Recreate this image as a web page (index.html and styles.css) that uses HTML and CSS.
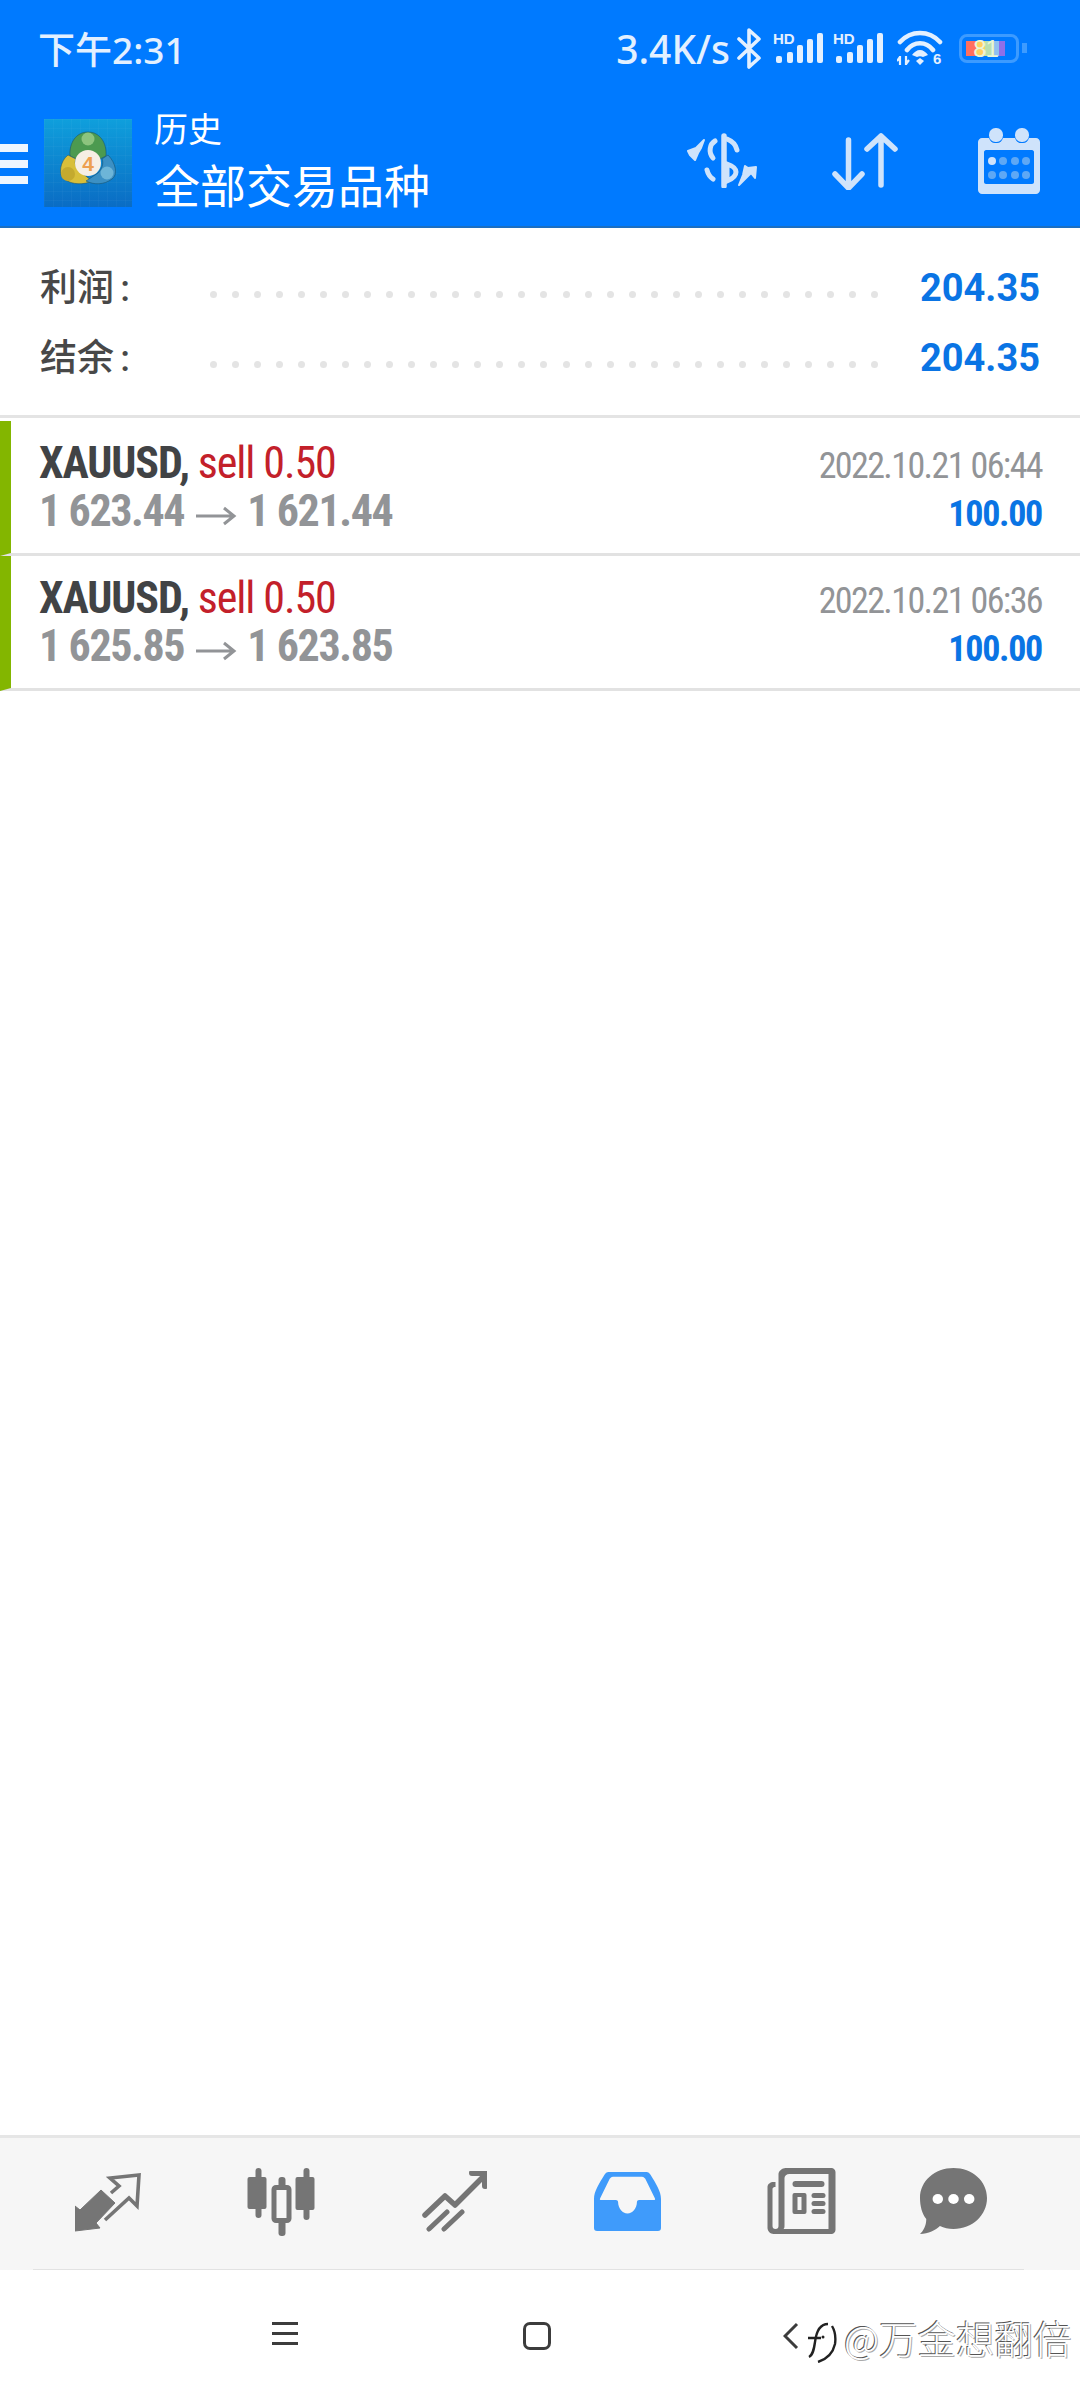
FILE: index.html
```html
<!DOCTYPE html>
<html lang="zh-CN">
<head>
  <meta charset="UTF-8" />
  <meta name="viewport" content="width=device-width, initial-scale=1" />
  <title>历史</title>
  <link rel="stylesheet" href="styles.css">
</head>
<body>
  <div class="app">

    <!-- 顶部 -->
    <header class="header">
      <div class="status-bar">
        <div class="clock">下午2:31</div>
        <div class="status-right">
          <span class="speed">3.4K/s</span>
          <svg class="ic-bt" viewBox="0 0 25 41" width="25" height="41"><path d="M2 11l20 19-10 9V2l10 9L2 30" fill="none" stroke="#e3f0ff" stroke-width="3.6" stroke-linejoin="round" stroke-linecap="round"/></svg>
          <svg class="ic-signal" viewBox="0 -6 50 36" width="50" height="36"><text x="0" y="10.5" class="hd">HD</text><rect x="3" y="23" width="6" height="7" rx="2"/><rect x="14" y="19" width="6" height="11" rx="2"/><rect x="24" y="12" width="6" height="18" rx="2"/><rect x="34" y="6" width="6" height="24" rx="2"/><rect x="44" y="0" width="6" height="30" rx="2"/></svg>
          <svg class="ic-signal second" viewBox="0 -6 50 36" width="50" height="36"><text x="0" y="10.5" class="hd">HD</text><rect x="3" y="23" width="6" height="7" rx="2"/><rect x="14" y="19" width="6" height="11" rx="2"/><rect x="24" y="12" width="6" height="18" rx="2"/><rect x="34" y="6" width="6" height="24" rx="2"/><rect x="44" y="0" width="6" height="30" rx="2"/></svg>
          <svg class="ic-wifi" viewBox="0 0 46 36" width="46" height="36">
            <path d="M3 12C14 0 32 0 43 12M10 20C17 11 29 11 36 20" fill="none" stroke="#e3f0ff" stroke-width="4.6" stroke-linecap="round"/>
            <path d="M23 20c3 0 6 2 8 5l-5 2c-2-1-4-1-6 0l-5-2c2-3 5-5 8-5z" fill="#e3f0ff"/>
            <path d="M23 28l4 3-4 4-4-4z" fill="#e3f0ff"/>
            <path d="M3 26v9M9 26v9M0 31l3-4M9 34l3-4" fill="none" stroke="#e3f0ff" stroke-width="2.2"/>
            <text x="36" y="34" class="wifi6">6</text>
          </svg>
          <div class="battery">
            <div class="battery-body">
              <div class="battery-fill"><span>81</span></div>
            </div>
            <div class="battery-cap"></div>
          </div>
        </div>
      </div>

      <div class="toolbar">
        <div class="menu-btn"><i></i><i></i><i></i></div>
        <svg class="logo" viewBox="0 0 88 88" width="88" height="88">
          <defs>
            <linearGradient id="logoBg" x1="0" y1="0" x2="0" y2="1">
              <stop offset="0" stop-color="#0f9fdc"/>
              <stop offset="1" stop-color="#0a6cc4"/>
            </linearGradient>
            <pattern id="logoGrid" width="9" height="9" patternUnits="userSpaceOnUse">
              <path d="M9 0H0V9" fill="none" stroke="#fff" stroke-opacity=".05" stroke-width="1"/>
            </pattern>
          </defs>
          <rect width="88" height="88" fill="url(#logoBg)"/>
          <rect width="88" height="88" fill="url(#logoGrid)"/>
          <g stroke="#17506a" stroke-opacity=".55" stroke-width="1">
            <path d="M44 13C56 13 63 24 62 37L52 42C50 36 38 36 36 42L26 37C25 24 32 13 44 13z" fill="#4c9a50"/>
            <path d="M24 36C16 42 14 56 20 60 28 66 40 66 48 62L38 54C32 50 30 44 32 40z" fill="#d8bf3a"/>
            <path d="M64 36C72 44 74 56 68 60 60 66 50 66 42 62L54 54C58 50 60 44 58 40z" fill="#3c90c4"/>
          </g>
          <circle cx="44" cy="20" r="6.5" fill="#8cc47e"/>
          <circle cx="24" cy="55" r="7" fill="#c4aa2e"/>
          <circle cx="63" cy="54" r="6.5" fill="#6db5d8"/>
          <circle cx="44" cy="44" r="13" fill="#f6efe4"/>
          <text x="44" y="52" class="logo-num">4</text>
        </svg>
        <div class="titles">
          <div class="title-small">历史</div>
          <div class="title-big">全部交易品种</div>
        </div>
        <div class="actions">
          <svg class="act-money" viewBox="0 0 74 55" width="74" height="55">
            <path d="M39 3v50" fill="none" stroke="#cfe3fb" stroke-width="5.5" stroke-linecap="round"/>
            <path d="M42 6c5 2 9 6 10 11M30 8c-5 3-7 11-2 17M22 37c1 4 3 7 6 9M42 31c6 2 9 5 9 8 0 4-4 7-9 9z" fill="none" stroke="#cfe3fb" stroke-width="5" stroke-linecap="round"/>
            <path d="M3 18l8-3 8-8-3 8-3 5-3 7-5-5z" fill="#cfe3fb" stroke="#cfe3fb" stroke-width="2" stroke-linejoin="round"/>
            <path d="M71 34l-1 11-4-5-12 12 4-10 2-9 3 2z" fill="#cfe3fb" stroke="#cfe3fb" stroke-width="2" stroke-linejoin="round"/>
          </svg>
          <svg class="act-sort" viewBox="0 0 66 57" width="66" height="57">
            <path d="M16.5 7v47M3 41l13.500 14L30 41M49 52V3M35 16L49 3l14 13" fill="none" stroke="#cfe3fb" stroke-width="5.500" stroke-linecap="round" stroke-linejoin="round"/>
          </svg>
          <svg class="act-cal" viewBox="0 0 64 66" width="64" height="66">
            <path fill-rule="evenodd" d="M5 10h7c1 3 3 5 6 5h2c3 0 5-2 6-5h12c1 3 3 5 6 5h2c3 0 5-2 6-5h7c2 0 4 2 4 4v48c0 2-2 4-4 4H5c-2 0-4-2-4-4V14c0-2 2-4 4-4zM9 22c-1 0-2 1-2 2v30c0 1 1 2 2 2h46c1 0 2-1 2-2V24c0-1-1-2-2-2z" fill="#cfe3fb"/>
            <rect x="12" y="0" width="14" height="14" rx="6.500" fill="#cfe3fb"/>
            <rect x="38" y="0" width="14" height="14" rx="6.500" fill="#cfe3fb"/>
            <circle cx="15" cy="33" r="4" fill="#cfe3fb"/><circle cx="26" cy="33" r="4" fill="#5ea8f5"/><circle cx="38" cy="33" r="4" fill="#5ea8f5"/><circle cx="49" cy="33" r="4" fill="#5ea8f5"/>
            <circle cx="15" cy="47" r="4" fill="#5ea8f5"/><circle cx="26" cy="47" r="4" fill="#5ea8f5"/><circle cx="38" cy="47" r="4" fill="#5ea8f5"/><circle cx="49" cy="47" r="4" fill="#5ea8f5"/>
          </svg>
        </div>
      </div>
    </header>

    <!-- 汇总 -->
    <section class="summary">
      <div class="sum-row">
        <span class="sum-label">利润 :</span>
        <span class="dots"></span>
        <span class="sum-value">204.35</span>
      </div>
      <div class="sum-row">
        <span class="sum-label">结余 :</span>
        <span class="dots"></span>
        <span class="sum-value">204.35</span>
      </div>
    </section>

    <!-- 交易记录 -->
    <section class="deals">
      <div class="deal">
        <div class="deal-left">
          <div class="deal-title"><b>XAUUSD,</b> <span class="sell">sell 0.50</span></div>
          <div class="deal-price">1 623.44<svg class="arrow" viewBox="0 0 41 20" width="41" height="20"><path d="M0 10h38M28 2l10 8-10 8" fill="none" stroke="#929497" stroke-width="3"/></svg>1 621.44</div>
        </div>
        <div class="deal-right">
          <div class="deal-date">2022.10.21 06:44</div>
          <div class="deal-profit">100.00</div>
        </div>
      </div>
      <div class="deal">
        <div class="deal-left">
          <div class="deal-title"><b>XAUUSD,</b> <span class="sell">sell 0.50</span></div>
          <div class="deal-price">1 625.85<svg class="arrow" viewBox="0 0 41 20" width="41" height="20"><path d="M0 10h38M28 2l10 8-10 8" fill="none" stroke="#929497" stroke-width="3"/></svg>1 623.85</div>
        </div>
        <div class="deal-right">
          <div class="deal-date">2022.10.21 06:36</div>
          <div class="deal-profit">100.00</div>
        </div>
      </div>
    </section>

    <div class="spacer"></div>

    <!-- 底部导航 -->
    <nav class="tabbar">
      <svg viewBox="0 0 67 59" width="67" height="59" class="tab-trade">
        <path d="M0 58V33l5 4 21-20 14 13-19 20 4 5z" fill="#757575" stroke="#757575" stroke-width="1" stroke-linejoin="round"/>
        <path d="M36 20l8-7-9-8 29-3-2 31-8-8-24 22" fill="none" stroke="#757575" stroke-width="3.600"/>
      </svg>
      <svg viewBox="0 0 68 68" width="69" height="68" class="tab-chart">
        <g fill="#757575">
          <rect x="8" y="0" width="6" height="50" rx="3"/><rect x="0" y="9" width="19" height="32" rx="2"/>
          <rect x="31" y="9" width="7" height="59" rx="3"/>
          <rect x="56" y="0" width="6" height="52" rx="3"/><rect x="48" y="9" width="19" height="33" rx="2"/>
        </g>
        <rect x="26.500" y="19.500" width="15" height="33" rx="2" fill="#f6f6f6" stroke="#757575" stroke-width="5"/>
      </svg>
      <svg viewBox="0 0 65 61" width="65" height="61" class="tab-stats">
        <path d="M3 44l20-19 10 9 29-29" fill="none" stroke="#757575" stroke-width="5.500" stroke-linecap="round" stroke-linejoin="round"/>
        <path d="M50 2h13v13" fill="none" stroke="#757575" stroke-width="6" stroke-linecap="round" stroke-linejoin="round"/>
        <path d="M7 58l18-17M22 58l18-17" fill="none" stroke="#757575" stroke-width="5" stroke-linecap="round"/>
      </svg>
      <svg viewBox="0 0 64 62" width="67" height="60" preserveAspectRatio="none" class="tab-history">
        <path fill-rule="evenodd" d="M14 1h36c2 0 3 1 4 3 5 9 10 17 10 25v30c0 2-1 3-3 3H3c-2 0-3-1-3-3V29c0-8 5-16 10-25 1-2 2-3 4-3zM18 6c-1 0-2 1-3 2l-9 20c-1 2 0 2 1 2h14c1 0 2 1 2 2 0 6 4 12 9 12s9-6 9-12c0-1 1-2 2-2h14c1 0 2 0 1-2L49 8c-1-1-2-2-3-2z" fill="#3f9bfb"/>
      </svg>
      <svg viewBox="0 0 68 66" width="69" height="66" class="tab-news">
        <path fill-rule="evenodd" d="M18 0h46c2 0 4 2 4 4v58c0 2-2 4-4 4H6c-3 0-6-3-6-6V19c0-3 3-5 6-5h2v5H7c-1 0-2 1-2 2v37c0 2 1 3 3 3s3-1 3-3V6c0-3 4-6 7-6zM22 6c-3 0-5 2-5 4v47c0 2 0 3-1 4h45V6z" fill="#757575"/>
        <rect x="25" y="13" width="32" height="6" rx="3" fill="#757575"/>
        <rect x="25" y="25" width="14" height="21" rx="2" fill="#757575"/>
        <rect x="30" y="29" width="4" height="13" fill="#f6f6f6"/>
        <rect x="44" y="25" width="14" height="5" rx="2.500" fill="#757575"/>
        <rect x="44" y="33" width="14" height="5" rx="2.500" fill="#757575"/>
        <rect x="44" y="41" width="14" height="5" rx="2.500" fill="#757575"/>
      </svg>
      <svg viewBox="0 0 64 66" width="67" height="66" preserveAspectRatio="none" class="tab-chat">
        <path d="M32 0c18 0 32 13 32 30S50 61 32 61c-5 0-9-1-13-3-4 4-11 8-19 8 3-3 6-8 6-15C2 46 0 38 0 30 0 13 14 0 32 0z" fill="#757575"/>
        <circle cx="17" cy="31" r="5" fill="#fff"/><circle cx="32" cy="31" r="5" fill="#fff"/><circle cx="47" cy="31" r="5" fill="#fff"/>
      </svg>
    </nav>

    <!-- 系统导航 -->
    <div class="sysnav">
      <div class="sys-menu"><i></i><i></i><i></i></div>
      <div class="sys-home"></div>
      <svg class="sys-back" viewBox="0 0 16 28" width="16" height="28"><path d="M14 2L2 14l12 12" fill="none" stroke="#3c3c3c" stroke-width="3"/></svg>
      <div class="watermark">
        <svg viewBox="0 0 30 44" width="30" height="44" class="wm-logo">
          <path d="M2 38c4-2 5-8 6-15 1-8 4-18 13-18M1 19h13M11 43c9-3 15-9 17-18 1-7 0-13-3-18" fill="none" stroke="#222" stroke-width="2.400"/>
          <circle cx="16" cy="18" r="1.500" fill="#222"/>
        </svg>
        <span>@万金想翻倍</span>
      </div>
    </div>

  </div>

  <script>
    // 虚线的点
    document.querySelectorAll('.dots').forEach(d => {
      for (let i = 0; i < 31; i++) d.appendChild(document.createElement('i'));
    });
  </script>
</body>
</html>
```

FILE: styles.css
```css
* {
  box-sizing: border-box;
}
body {
  margin: 0;
  background: #fff;
  font-family: Roboto, "Noto Sans CJK SC", sans-serif;
}
svg {
  flex-shrink: 0;
}
.app {
  width: 1080px;
  height: 2400px;
  display: flex;
  flex-direction: column;
  overflow: hidden;
}

/* header */
.header {
  height: 228px;
  background: #007aff;
  border-bottom: 2px solid #1b6fc2;
  color: #fff;
}
.status-bar {
  height: 96px;
  display: flex;
  justify-content: space-between;
  align-items: center;
  padding: 0 53px 0 38px;
  color: #e3f0ff;
}
.clock {
  font-family: "Noto Sans", "Noto Sans CJK SC", sans-serif;
  font-weight: 500;
  font-size: 37px;
}
.status-right {
  display: flex;
  align-items: center;
}
.speed {
  font-family: "Noto Sans", sans-serif;
  font-weight: 500;
  font-size: 39px;
}
.ic-bt {
  margin-left: 7px;
}
.ic-signal {
  margin: 0 0 6px 11px;
  fill: #e3f0ff;
}
.ic-signal.second {
  margin-left: 10px;
}
.ic-signal .hd {
  font: bold 15px "Liberation Sans", sans-serif;
}
.ic-wifi {
  margin-left: 14px;
}
.wifi6 {
  font: bold 15px "Liberation Sans", sans-serif;
  fill: #e3f0ff;
}
.battery {
  display: flex;
  align-items: center;
  margin-left: 16px;
}
.battery-body {
  width: 60px;
  height: 29px;
  border: 3px solid #3d9bff;
  border-radius: 8px;
  padding: 4px 11px 4px 4px;
}
.battery-fill {
  height: 100%;
  background: linear-gradient(90deg, #ff6f5e 0 25%, #ffd060 25% 50%, #b9e0b0 50% 72%, #8fc0f0 72% 85%, #8f6fe8 85%);
  display: flex;
  justify-content: center;
  align-items: center;
}
.battery-fill span {
  font: 24px/15px "Liberation Sans", sans-serif;
  letter-spacing: -1px;
  color: #e8f5d8;
}
.battery-cap {
  width: 5px;
  height: 10px;
  margin-left: 3px;
  background: #3d9bff;
}

.toolbar {
  height: 130px;
  display: flex;
  align-items: flex-start;
}
.menu-btn {
  width: 28px;
  margin-top: 48px;
  display: flex;
  flex-direction: column;
  gap: 8px;
}
.menu-btn i {
  display: block;
  height: 8px;
  background: #eef6ff;
}
.logo {
  margin: 23px 0 0 16px;
}
.logo-num {
  font: bold 21px "Liberation Sans", sans-serif;
  fill: #eda050;
  text-anchor: middle;
}
.titles {
  margin-left: 22px;
  padding-top: 12px;
}
.title-small {
  font-size: 34px;
  line-height: 44px;
}
.title-big {
  margin-top: 6px;
  font-size: 46px;
  line-height: 58px;
}
.actions {
  margin-left: auto;
  display: flex;
  align-items: flex-start;
  padding-right: 39px;
}
.act-money {
  margin-top: 37px;
}
.act-sort {
  margin: 37px 0 0 73px;
}
.act-cal {
  margin: 32px 0 0 79px;
}

/* summary */
.summary {
  height: 190px;
  padding-top: 25px;
  border-bottom: 3px solid #e4e4e4;
}
.sum-row {
  height: 70px;
  display: flex;
  align-items: center;
  padding: 0 40px;
}
.sum-label {
  width: 170px;
  margin-top: -6px;
  font-size: 37px;
  font-weight: 500;
  word-spacing: -3px;
  color: #484848;
}
.dots {
  width: 668px;
  margin-top: 12px;
  display: flex;
  justify-content: space-between;
}
.dots i {
  width: 7px;
  height: 7px;
  border-radius: 50%;
  background: #e4e4e4;
}
.sum-value {
  margin-left: auto;
  font-size: 38px;
  font-weight: 700;
  color: #0a74e4;
}

/* deals */
.deals {
  padding-top: 3px;
}
.deal {
  height: 135px;
  display: flex;
  justify-content: space-between;
  padding: 17px 38px 0 28px;
  border-left: 11px solid #83b600;
  border-bottom: 3px solid #e2e2e2;
}
.deal-title, .deal-price, .deal-date, .deal-profit {
  font-family: "Roboto Condensed", Roboto, sans-serif;
  font-stretch: condensed;
  white-space: nowrap;
}
.deal-title {
  font-size: 44px;
  line-height: 50px;
  letter-spacing: -1.100px;
}
.deal-title b {
  color: #414345;
}
.sell {
  color: #c3202a;
}
.deal-price {
  font-size: 44px;
  line-height: 46px;
  font-weight: 700;
  letter-spacing: -1.400px;
  color: #929497;
}
.arrow {
  margin: 0 10px 0 12px;
}
.deal-right {
  padding-top: 3px;
  text-align: right;
}
.deal-date {
  font-size: 36px;
  line-height: 50px;
  letter-spacing: -1.600px;
  color: #929497;
}
.deal-profit {
  font-size: 36px;
  line-height: 46px;
  font-weight: 700;
  letter-spacing: -1.300px;
  color: #0a74e4;
}

.spacer {
  flex: 1;
}

/* tab bar */
.tabbar {
  flex: 0 0 135px;
  background: #f6f6f6;
  border-top: 3px solid #e6e6e6;
  position: relative;
  display: flex;
  align-items: flex-start;
  padding-top: 30px;
}
.tabbar::after {
  content: "";
  position: absolute;
  left: 33px;
  right: 56px;
  bottom: 0;
  height: 1px;
  background: #e2e2e2;
}
.tab-trade { margin-left: 75px; margin-top: 5px; }
.tab-chart { margin-left: 105px; }
.tab-stats { margin-left: 106px; margin-top: 3px; }
.tab-history { margin-left: 107px; margin-top: 3px; }
.tab-news { margin-left: 106px; }
.tab-chat { margin-left: 84px; }

/* system nav */
.sysnav {
  flex: 0 0 130px;
  position: relative;
  display: flex;
  align-items: flex-start;
  padding-top: 52px;
}
.sys-menu {
  width: 26px;
  margin-left: 272px;
  display: flex;
  flex-direction: column;
  gap: 7px;
}
.sys-menu i {
  display: block;
  height: 3px;
  background: #3c3c3c;
}
.sys-home {
  width: 28px;
  height: 28px;
  margin-left: 225px;
  border: 3px solid #3c3c3c;
  border-radius: 7px;
}
.sys-back {
  margin-left: 232px;
}
.watermark {
  position: absolute;
  left: 807px;
  top: 39px;
  display: flex;
  align-items: center;
}
.wm-logo {
  margin-top: 8px;
  margin-right: 7px;
}
.watermark span {
  font-family: "Noto Sans CJK SC", sans-serif;
  font-weight: 300;
  font-size: 38.500px;
  color: #fff;
  text-shadow: -1px -1px 0 #555, 1px 1px 0 #aaa;
}
```
